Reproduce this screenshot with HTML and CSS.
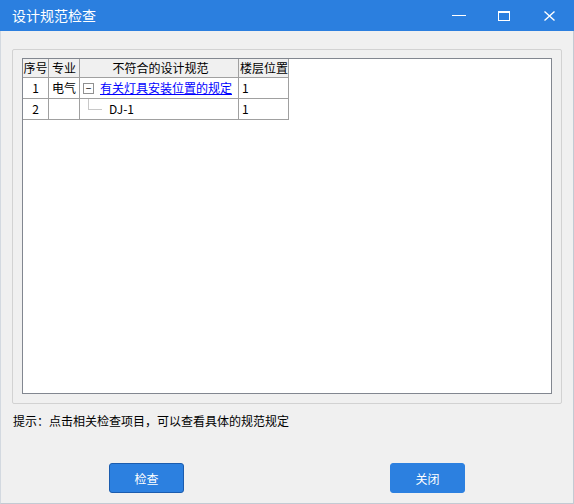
FILE: index.html
```html
<!DOCTYPE html>
<html lang="zh">
<head>
<meta charset="utf-8">
<link rel="stylesheet" href="styles.css">
</head>
<body>
<div class="window">
  <div class="titlebar">
    <div class="title">设计规范检查</div>
    <div class="controls">
      <svg class="ctl" width="46" height="31" viewBox="0 0 46 31"><rect x="16" y="15" width="14" height="1" fill="#fff"/></svg>
      <svg class="ctl" width="46" height="31" viewBox="0 0 46 31"><rect x="16.5" y="11.5" width="11" height="9" fill="none" stroke="#fff"/><rect x="16" y="11" width="12" height="2" fill="#fff"/></svg>
      <svg class="ctl" width="46" height="31" viewBox="0 0 46 31"><path d="M16.5 11.5 L26.5 20.5 M26.5 11.5 L16.5 20.5" stroke="#fff" stroke-width="1.4"/></svg>
    </div>
  </div>
  <div class="body">
    <div class="group">
      <div class="panel">
        <table class="grid">
          <thead>
            <tr>
              <th class="c1">序号</th>
              <th class="c2">专业</th>
              <th class="c3">不符合的设计规范</th>
              <th class="c4">楼层位置</th>
            </tr>
          </thead>
          <tbody>
            <tr>
              <td class="c1 center">1</td>
              <td class="c2 center">电气</td>
              <td class="c3 tree">
                <span class="expander">−</span><a class="link" href="#">有关灯具安装位置的规定</a>
              </td>
              <td class="c4">1</td>
            </tr>
            <tr>
              <td class="c1 center">2</td>
              <td class="c2"></td>
              <td class="c3 tree child">
                <span class="vline"></span><span class="hline"></span><span class="leaf">DJ-1</span>
              </td>
              <td class="c4">1</td>
            </tr>
          </tbody>
        </table>
      </div>
    </div>
    <div class="hint">提示：点击相关检查项目，可以查看具体的规范规定</div>
    <div class="buttons">
      <button class="btn primary">检查</button>
      <button class="btn">关闭</button>
    </div>
  </div>
</div>
</body>
</html>
```

FILE: styles.css
```css
html, body {
  margin: 0;
  padding: 0;
}
body {
  width: 574px;
  height: 504px;
  overflow: hidden;
  font-family: "Noto Sans CJK SC", "Noto Sans", sans-serif;
  font-size: 12px;
  color: #000;
}
.window {
  width: 574px;
  height: 504px;
  box-sizing: border-box;
  background: #f0f0f0;
  border-left: 1px solid #d3d9e0;
  border-right: 1px solid #c3cad3;
  border-bottom: 1px solid #c3cad3;
  display: flex;
  flex-direction: column;
}
.titlebar {
  height: 31px;
  margin: 0 -1px;
  background: #2b7fdf;
  display: flex;
  align-items: center;
  justify-content: space-between;
  flex: none;
}
.title {
  color: #fff;
  font-size: 14px;
  padding-left: 12px;
  line-height: 31px;
}
.controls {
  display: flex;
}
.ctl {
  display: block;
}
.body {
  padding: 18px 0 0 11px;
  display: flex;
  flex-direction: column;
}
.group {
  width: 550px;
  height: 355px;
  box-sizing: border-box;
  border: 1px solid #d2d2d2;
  border-radius: 2px;
  padding: 8px 0 0 9px;
}
.panel {
  width: 530px;
  height: 336px;
  box-sizing: border-box;
  border: 1px solid #828790;
  background: #fff;
}
.grid {
  border-collapse: collapse;
  table-layout: fixed;
  width: 266px;
}
.grid th, .grid td {
  border: 1px solid #a0a0a0;
  padding: 0;
  white-space: nowrap;
  overflow: hidden;
  font-weight: normal;
}
.grid tr:first-child th {
  border-top: none;
}
.grid th:first-child, .grid td:first-child {
  border-left: none;
}
.grid th {
  background: #f0f0f0;
  height: 18px;
  line-height: 18px;
  text-align: center;
}
.grid td {
  height: 20px;
  line-height: 20px;
}
.c1 { width: 25px; }
.c2 { width: 30px; }
.c3 { width: 155px; }
.c4 { width: 46px; }
th.c3 { padding: 0 0 0 3px; }
th.c4 { padding: 0 0 0 1px; width: 48px; }
td.c4 { padding-left: 3px; }
.center { text-align: center; }
.tree {
  position: relative;
}
.grid td.tree {
  padding-left: 3px;
}
.expander {
  display: inline-block;
  width: 9px;
  height: 9px;
  border: 1px solid #919191;
  line-height: 8px;
  text-align: center;
  font-size: 10px;
  vertical-align: 1px;
  margin-right: 6px;
  background: #fff;
}
.link {
  color: #0000ff;
  text-decoration: underline;
}
.child .vline {
  position: absolute;
  left: 8px;
  top: 0;
  height: 11px;
  border-left: 1px solid #c8c8c8;
}
.child .hline {
  position: absolute;
  left: 8px;
  top: 10px;
  width: 14px;
  border-top: 1px solid #c8c8c8;
}
.leaf {
  padding-left: 26px;
}
.hint {
  margin-top: 7px;
  padding-left: 1px;
  line-height: 20px;
}
.buttons {
  display: flex;
  margin-top: 32px;
  padding-left: 97px;
  gap: 206px;
}
.btn {
  width: 75px;
  height: 30px;
  box-sizing: border-box;
  background: #2c80e0;
  color: #fff;
  border: 1px solid #2c80e0;
  border-radius: 3px;
  font-family: "Noto Sans CJK SC", "Noto Sans", sans-serif;
  font-size: 12px;
  padding: 0;
}
.btn.primary {
  border-color: #1b5cae;
}
```
